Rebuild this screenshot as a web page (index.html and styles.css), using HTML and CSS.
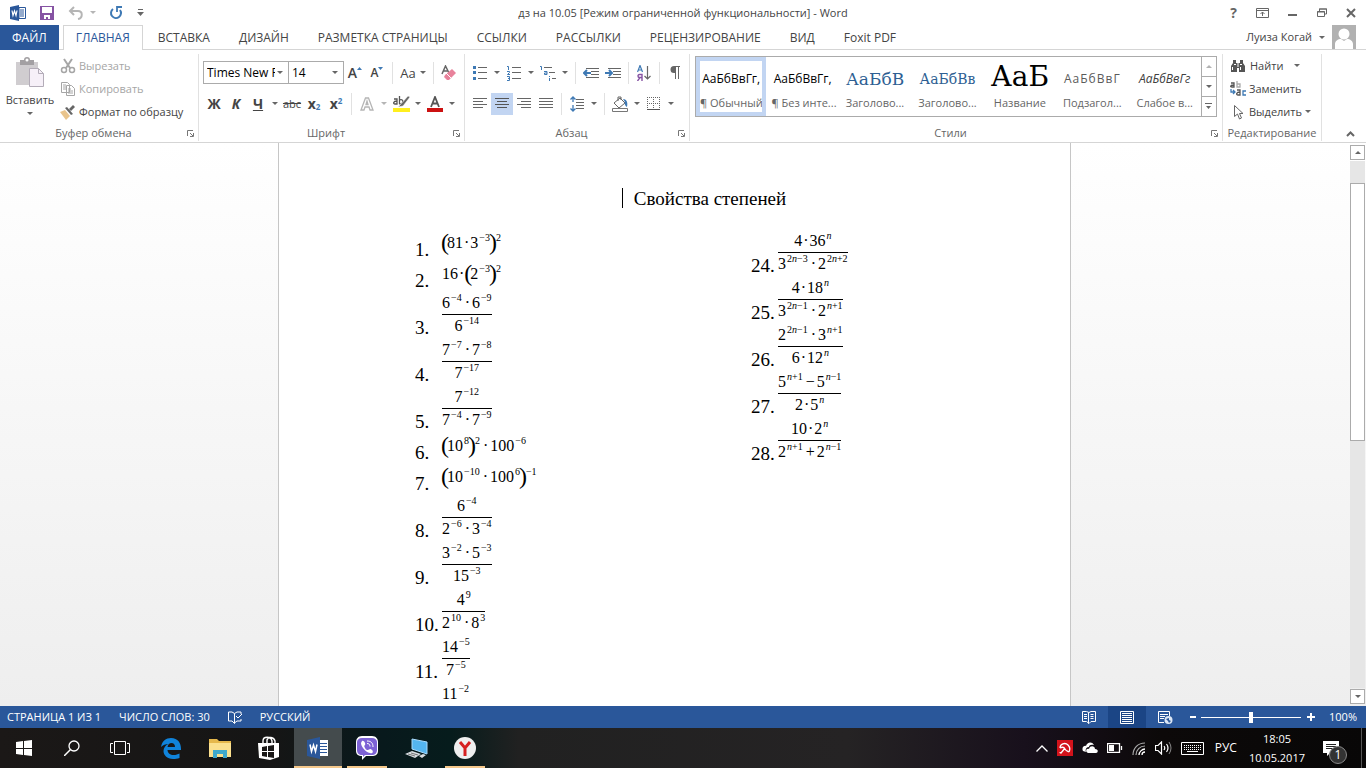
FILE: index.html
```html
<!DOCTYPE html>
<html lang="ru">
<head>
    <meta charset="UTF-8">
    <meta name="viewport" content="width=device-width, initial-scale=1.0">
    <title>дз на 10.05 - Word</title>
    <link rel="stylesheet" href="styles.css">
</head>
<body>
    <header class="titlebar">
        <div class="quick-access">
            <svg class="qa-word" width="16" height="16" viewBox="0 0 16 16"><path fill="#2a579a" d="M0 2l9-2v16l-9-2z"/><path fill="#fff" stroke="#2a579a" d="M9 2.500h6.500v11H9z"/><path stroke="#2a579a" d="M10 5h4M10 7h4M10 9h4M10 11h4"/><path fill="none" stroke="#fff" stroke-width="1.200" d="M2 5.500l1 5 1.500-4.500L6 10.500l1-5"/></svg>
            <button class="icon-btn" aria-label="Сохранить"><svg width="14" height="14" viewBox="0 0 14 14"><path fill="#8653a3" d="M0 0h14v14H0z"/><path fill="#fff" d="M2 1h10v6H2zM4 9h6v4H8v-2H6v2H4z"/></svg></button>
            <button class="icon-btn" aria-label="Отменить"><svg width="16" height="14" viewBox="0 0 16 14"><path fill="none" stroke="#b5b5b5" stroke-width="2" d="M1.500 5H10c5 0 5 7 0 8M6 1L2 5l4 4"/></svg></button>
            <span class="caret light"></span>
            <button class="icon-btn redo" aria-label="Повторить"><svg width="14" height="14" viewBox="0 0 14 14"><path fill="none" stroke="#3e79b4" stroke-width="2" d="M4 3a5 5 0 1 0 7 1"/><path fill="none" stroke="#3e79b4" stroke-width="1.800" d="M13 1H8v5"/></svg></button>
            <button class="icon-btn" aria-label="Настройка панели"><svg width="7" height="7" viewBox="0 0 7 7"><path fill="#666" d="M1 0h5v1H1zM0 3h7L3.500 7z"/></svg></button>
        </div>
        <div class="title">дз на 10.05 [Режим ограниченной функциональности] - Word</div>
        <div class="window-controls">
            <button class="icon-btn help" aria-label="Справка">?</button>
            <button class="icon-btn" aria-label="Параметры ленты"><svg width="13" height="10" viewBox="0 0 13 10"><path fill="none" stroke="#666" d="M.5.5h12v9H.5zM.5 2.500h12M6.500 8V4M4.500 6l2-2 2 2"/></svg></button>
            <button class="icon-btn" aria-label="Свернуть"><svg width="10" height="10" viewBox="0 0 10 10"><path fill="#666" d="M0 6h9v2H0z"/></svg></button>
            <button class="icon-btn" aria-label="Развернуть"><svg width="10" height="10" viewBox="0 0 10 10"><path fill="none" stroke="#666" d="M.5 3.500h7v5h-7zM2.500 3V1h7v5H8"/><path stroke="#666" d="M0 4h8M2 1h8"/></svg></button>
            <button class="icon-btn" aria-label="Закрыть"><svg width="10" height="10" viewBox="0 0 10 10"><path stroke="#666" stroke-width="2" d="M1 1l8 8M9 1L1 9"/></svg></button>
        </div>
    </header>

    <nav class="tabs">
        <button class="tab file">ФАЙЛ</button>
        <button class="tab active">ГЛАВНАЯ</button>
        <button class="tab">ВСТАВКА</button>
        <button class="tab">ДИЗАЙН</button>
        <button class="tab">РАЗМЕТКА СТРАНИЦЫ</button>
        <button class="tab">ССЫЛКИ</button>
        <button class="tab">РАССЫЛКИ</button>
        <button class="tab">РЕЦЕНЗИРОВАНИЕ</button>
        <button class="tab">ВИД</button>
        <button class="tab">Foxit PDF</button>
        <button class="account">
            Луиза Когай <span class="caret"></span>
            <svg width="24" height="24" viewBox="0 0 24 24"><path fill="#b1b1b1" d="M0 0h24v24H0z"/><circle cx="12" cy="9" r="5.500" fill="#fff"/><path fill="#fff" d="M3 24v-5c0-3 3-5 6-5l3 2 3-2c3 0 6 2 6 5v5z"/></svg>
        </button>
    </nav>

    <div class="ribbon">
        <section class="group clipboard">
            <div class="group-body">
                <button class="paste">
                    <svg width="30" height="31" viewBox="0 0 30 31"><path fill="#d0cdd0" d="M1 5h22v23H1z"/><path fill="#a3a0a3" d="M5 3h4a3 3 0 0 1 6 0h4v5H5z"/><circle cx="12" cy="3" r="1.500" fill="#fff"/><path fill="#f6f0f8" stroke="#b3acb8" d="M14.500 11.500h9l5 5v13h-14z"/><path fill="none" stroke="#b3acb8" d="M23.500 11.500v5h5"/></svg>
                    <span>Вставить</span>
                    <span class="caret"></span>
                </button>
                <div class="command-list">
                    <button class="command disabled"><svg width="16" height="16" viewBox="0 0 16 16"><path fill="none" stroke="#a6a6a6" stroke-width="2" d="M4 1l6 9M12 1l-6 9"/><circle cx="4" cy="12" r="2.500" fill="none" stroke="#a6a6a6" stroke-width="1.500"/><circle cx="12" cy="12" r="2.500" fill="none" stroke="#a6a6a6" stroke-width="1.500"/></svg>Вырезать</button>
                    <button class="command disabled"><svg width="16" height="16" viewBox="0 0 16 16"><path fill="#fff" stroke="#a6a6a6" d="M1.500 1.500h6l2 2v8h-8zM3 4h3M3 6h3M3 8h3M6.500 4.500h5l3 3v7h-8zM8 8h3M8 10h5M8 12h5"/></svg>Копировать</button>
                    <button class="command"><svg width="16" height="16" viewBox="0 0 16 16"><path fill="#e9c48c" d="M0 8l5-2 5 6-4 4z"/><path fill="#666" d="M5 4l2-1 6 7-2 1zM9 5l4-4 2 2-4 4z"/></svg>Формат по образцу</button>
                </div>
            </div>
            <div class="group-label"><span>Буфер обмена</span><button class="launcher" aria-label="Буфер обмена"><svg width="7" height="7" viewBox="0 0 7 7"><path fill="none" stroke="#777" d="M.5 6V.5H6M3 3l3 3M6.500 3v3.500H3"/></svg></button></div>
        </section>

        <section class="group font">
            <div class="group-body rows">
                <div class="tool-row">
                    <label class="combo font-name"><select aria-label="Шрифт"><option>Times New Roman</option></select></label>
                    <label class="combo font-size"><select aria-label="Размер шрифта"><option>14</option></select></label>
                    <button class="tool" aria-label="Увеличить размер"><span class="letter">A</span><svg width="5" height="14" viewBox="0 0 5 14"><path fill="#3e79b4" d="M0 4h5L2.500 1z"/></svg></button>
                    <button class="tool" aria-label="Уменьшить размер"><span class="letter small">A</span><svg width="5" height="14" viewBox="0 0 5 14"><path fill="#3e79b4" d="M0 1h5L2.500 4z"/></svg></button>
                    <i class="sep"></i>
                    <button class="tool case">Aa<span class="caret"></span></button>
                    <i class="sep"></i>
                    <button class="tool" aria-label="Очистить формат"><svg width="16" height="16" viewBox="0 0 16 16"><path fill="none" stroke="#666" stroke-width="1.500" d="M1 9l3.500-8L8 8M2 6h5"/><path fill="#e8829b" d="M4 10l7-6 4 4-7 7H6l-3-3z"/><path stroke="#fff" d="M5 8l5 5"/></svg></button>
                </div>
                <div class="tool-row">
                    <button class="tool bold">Ж</button>
                    <button class="tool bold italic">К</button>
                    <button class="tool bold under">Ч</button><span class="drop"><span class="caret"></span></span>
                    <button class="tool strike">abc</button>
                    <button class="tool bold">x<sub class="idx">2</sub></button>
                    <button class="tool bold">x<sup class="idx">2</sup></button>
                    <i class="sep"></i>
                    <button class="tool" aria-label="Текстовые эффекты"><svg width="14" height="14" viewBox="0 0 14 14"><path fill="#fff" stroke="#b5b5b5" stroke-width="1.300" d="M1 13L5.500 1h3L13 13h-3l-1-3H5l-1 3zM6 7.500h2L7 4z"/></svg></button><span class="drop"><span class="caret light"></span></span>
                    <button class="tool" aria-label="Цвет выделения"><svg width="17" height="16" viewBox="0 0 17 16"><path fill="#ffef1f" d="M0 12h17v4H0z"/><path fill="none" stroke="#555" stroke-width="1.300" d="M1 3h3v5H2C0 8 0 5 4 5M6.500 0v8M6.500 4c5-2 4 5 0 4"/><path fill="#666" stroke="#fff" stroke-width=".5" d="M15 0l2 1-7 9-5 1 3-3z"/></svg></button><span class="drop"><span class="caret"></span></span>
                    <button class="tool" aria-label="Цвет текста"><svg width="16" height="16" viewBox="0 0 16 16"><path fill="#c11" d="M0 12h16v4H0z"/><path fill="none" stroke="#555" stroke-width="1.800" d="M4 11L8 1l4 10M5.500 7.500h5"/></svg></button><span class="drop"><span class="caret"></span></span>
                </div>
            </div>
            <div class="group-label"><span>Шрифт</span><button class="launcher" aria-label="Шрифт"><svg width="7" height="7" viewBox="0 0 7 7"><path fill="none" stroke="#777" d="M.5 6V.5H6M3 3l3 3M6.500 3v3.500H3"/></svg></button></div>
        </section>

        <section class="group paragraph">
            <div class="group-body rows">
                <div class="tool-row">
                    <button class="tool" aria-label="Маркеры"><svg width="14" height="16" viewBox="0 0 14 16"><path fill="#3e79b4" d="M0 1h3v3H0zM0 6h3v3H0zM0 12h3v3H0z"/><path stroke="#666" d="M5 2.500h9M5 7.500h9M5 13.500h9"/></svg></button><span class="drop"><span class="caret"></span></span>
                    <button class="tool" aria-label="Нумерация"><svg width="14" height="16" viewBox="0 0 14 16"><path fill="none" stroke="#3e79b4" d="M0 1.500h1.500V5M0 6.500h2.500v1L.5 9.500H3M0 11.500h2.500v4H0M1 13.500h1.500"/><path stroke="#666" d="M5 2.500h9M5 7.500h9M5 13.500h9"/></svg></button><span class="drop"><span class="caret"></span></span>
                    <button class="tool" aria-label="Многоуровневый список"><svg width="16" height="16" viewBox="0 0 16 16"><path fill="none" stroke="#3e79b4" d="M0 1.500h1.500V5M4 6.500h3v3H4.500V8H7M9.500 11v1M9.500 13v3"/><path stroke="#666" d="M4 2.500h8M9 7.500h6M12 13.500h4"/></svg></button><span class="drop"><span class="caret"></span></span>
                    <i class="sep"></i>
                    <button class="tool" aria-label="Уменьшить отступ"><svg width="16" height="12" viewBox="0 0 16 12"><path stroke="#666" d="M3 1.500h13M8 4.500h8M8 7.500h8M3 10.500h13"/><path fill="none" stroke="#3e79b4" stroke-width="2" d="M1 6h7M4 3L1 6l3 3"/></svg></button>
                    <button class="tool" aria-label="Увеличить отступ"><svg width="16" height="12" viewBox="0 0 16 12"><path stroke="#666" d="M3 1.500h13M8 4.500h8M8 7.500h8M3 10.500h13"/><path fill="none" stroke="#3e79b4" stroke-width="2" d="M0 6h7M4 3l3 3-3 3"/></svg></button>
                    <i class="sep"></i>
                    <button class="tool" aria-label="Сортировка"><svg width="14" height="16" viewBox="0 0 14 16"><path fill="none" stroke="#3e79b4" stroke-width="1.200" d="M.5 7L3 .5 5.500 7M1.500 5h3"/><path fill="none" stroke="#8653a3" stroke-width="1.400" d="M5 16V9.500H2.500c-2 0-2 3 0 3H5M3 12.500L.5 16"/><path fill="none" stroke="#666" stroke-width="1.200" d="M10.500 1v13M7.500 11l3 3 3-3"/></svg></button>
                    <i class="sep"></i>
                    <button class="tool" aria-label="Знаки абзаца"><svg width="10" height="13" viewBox="0 0 10 13"><path fill="#666" d="M4 0h6v1H9v12H8V1H6v12H5V7H4a3.500 3.500 0 0 1 0-7z"/></svg></button>
                </div>
                <div class="tool-row">
                    <button class="tool" aria-label="По левому краю"><svg width="14" height="12" viewBox="0 0 14 12"><path stroke="#666" d="M0 .5h14M0 3.500h10M0 6.500h14M0 9.500h10"/></svg></button>
                    <button class="tool pressed" aria-label="По центру"><svg width="14" height="12" viewBox="0 0 14 12"><path stroke="#555" d="M0 .5h14M2 3.500h10M0 6.500h14M2 9.500h10"/></svg></button>
                    <button class="tool" aria-label="По правому краю"><svg width="14" height="12" viewBox="0 0 14 12"><path stroke="#666" d="M0 .5h14M4 3.500h10M0 6.500h14M4 9.500h10"/></svg></button>
                    <button class="tool" aria-label="По ширине"><svg width="14" height="12" viewBox="0 0 14 12"><path stroke="#666" d="M0 .5h14M0 3.500h14M0 6.500h14M0 9.500h14"/></svg></button>
                    <i class="sep"></i>
                    <button class="tool" aria-label="Интервал"><svg width="14" height="16" viewBox="0 0 14 16"><path fill="none" stroke="#3e79b4" stroke-width="1.300" d="M3 1v5M3 9v6M.5 3.500L3 1l2.500 2.500M.5 12.500L3 15l2.500-2.500"/><path stroke="#666" d="M6 3.500h8M6 6.500h8M6 9.500h8M6 12.500h8"/></svg></button><span class="drop"><span class="caret"></span></span>
                    <i class="sep"></i>
                    <button class="tool" aria-label="Заливка"><svg width="17" height="16" viewBox="0 0 17 16"><path fill="#fff" stroke="#777" d="M.5 12.500h15v3H.5z"/><path fill="#fff" stroke="#666" d="M2 7l6-5 5 5-6 5zM6 5V1h3v3"/><path fill="#3e79b4" d="M11 3c4 0 5 4 4 8-2-1-3-4-2-5z"/></svg></button><span class="drop"><span class="caret"></span></span>
                    <button class="tool" aria-label="Границы"><svg width="14" height="14" viewBox="0 0 14 14"><path fill="none" stroke="#666" stroke-dasharray="1 1" d="M0 .5h13M.5 0v12M12.500 0v12M6.500 0v12M0 6.500h13"/><path stroke="#555" d="M0 12.500h13"/></svg></button><span class="drop"><span class="caret"></span></span>
                </div>
            </div>
            <div class="group-label"><span>Абзац</span><button class="launcher" aria-label="Абзац"><svg width="7" height="7" viewBox="0 0 7 7"><path fill="none" stroke="#777" d="M.5 6V.5H6M3 3l3 3M6.500 3v3.500H3"/></svg></button></div>
        </section>

        <section class="group styles">
            <div class="group-body">
                <div class="gallery">
                    <button class="style selected"><span class="sample">АаБбВвГг,</span><span class="style-name">¶ Обычный</span></button>
                    <button class="style"><span class="sample">АаБбВвГг,</span><span class="style-name">¶ Без инте...</span></button>
                    <button class="style"><span class="sample heading-1">АаБбВ</span><span class="style-name">Заголово...</span></button>
                    <button class="style"><span class="sample heading-2">АаБбВв</span><span class="style-name">Заголово...</span></button>
                    <button class="style"><span class="sample name">АаБ</span><span class="style-name">Название</span></button>
                    <button class="style"><span class="sample subtitle">АаБбВвГ</span><span class="style-name">Подзагол...</span></button>
                    <button class="style"><span class="sample subtle">АаБбВвГг</span><span class="style-name">Слабое в...</span></button>
                    <div class="gallery-scroll">
                        <button class="off" aria-label="Вверх"><span class="caret up"></span></button>
                        <button aria-label="Вниз"><span class="caret"></span></button>
                        <button aria-label="Ещё"><svg width="7" height="7" viewBox="0 0 7 7"><path fill="#666" d="M0 0h7v1H0zM1 3h5L3.500 6z"/></svg></button>
                    </div>
                </div>
            </div>
            <div class="group-label"><span>Стили</span><button class="launcher" aria-label="Стили"><svg width="7" height="7" viewBox="0 0 7 7"><path fill="none" stroke="#777" d="M.5 6V.5H6M3 3l3 3M6.500 3v3.500H3"/></svg></button></div>
        </section>

        <section class="group editing">
            <div class="group-body">
                <div class="command-list">
                    <button class="command find"><svg width="16" height="16" viewBox="0 0 16 16"><path fill="#555" d="M3 2h3v3h4V2h3v3l2 3v6H9v-4H7v4H1V8l2-3z"/><path stroke="#fff" d="M8 5v4M2.500 9v3M10.500 9v3M4 6.500h2M10 6.500h2"/></svg>Найти<span class="caret"></span></button>
                    <button class="command"><svg width="16" height="16" viewBox="0 0 16 16"><path fill="none" stroke="#555" stroke-width="1.300" d="M1 2h3v4H2C0 6 0 4 4 4M7 9h3v5H8c-2 0-2-3 2-3"/><path fill="none" stroke="#aaa" stroke-width="1.300" d="M7 0v6h3V3H7"/><path fill="none" stroke="#3e79b4" stroke-width="1.300" d="M16 10h-3v4h3M1 8v3h4M3 9l2 2-2 2"/></svg>Заменить</button>
                    <button class="command"><svg width="16" height="16" viewBox="0 0 16 16"><path fill="#fff" stroke="#666" d="M4.500 1.500v11l3-2.500 2 5 2-1-2-4.500h3.500z"/></svg>Выделить<span class="caret"></span></button>
                </div>
            </div>
            <div class="group-label"><span>Редактирование</span></div>
        </section>
        <button class="collapse" aria-label="Свернуть ленту"><svg width="9" height="6" viewBox="0 0 9 6"><path fill="none" stroke="#666" stroke-width="2" d="M1 5l3.500-3.500L8 5"/></svg></button>
    </div>

    <main class="workspace">
        <div class="canvas">
            <article class="page">
                <h1 class="doc-title"><span class="doc-title-text">Свойства степеней</span></h1>
                <div class="columns">
                    <ol class="tasks">
                        <li><b>1.</b><span class="expr"><i class="par">(</i>81<i class="op">·</i>3<sup>−3</sup><i class="par">)</i><sup>2</sup></span></li>
                        <li><b>2.</b><span class="expr">16<i class="op">·</i><i class="par">(</i>2<sup>−3</sup><i class="par">)</i><sup>2</sup></span></li>
                        <li><b>3.</b><span class="frac"><span>6<sup>−4</sup><i class="op">·</i>6<sup>−9</sup></span><span>6<sup>−14</sup></span></span></li>
                        <li><b>4.</b><span class="frac"><span>7<sup>−7</sup><i class="op">·</i>7<sup>−8</sup></span><span>7<sup>−17</sup></span></span></li>
                        <li><b>5.</b><span class="frac"><span>7<sup>−12</sup></span><span>7<sup>−4</sup><i class="op">·</i>7<sup>−9</sup></span></span></li>
                        <li><b>6.</b><span class="expr"><i class="par">(</i>10<sup>8</sup><i class="par">)</i><sup>2</sup><i class="op">·</i>100<sup>−6</sup></span></li>
                        <li><b>7.</b><span class="expr"><i class="par">(</i>10<sup>−10</sup><i class="op">·</i>100<sup>6</sup><i class="par">)</i><sup>−1</sup></span></li>
                        <li><b>8.</b><span class="frac"><span>6<sup>−4</sup></span><span>2<sup>−6</sup><i class="op">·</i>3<sup>−4</sup></span></span></li>
                        <li><b>9.</b><span class="frac"><span>3<sup>−2</sup><i class="op">·</i>5<sup>−3</sup></span><span>15<sup>−3</sup></span></span></li>
                        <li><b>10.</b><span class="frac"><span>4<sup>9</sup></span><span>2<sup>10</sup><i class="op">·</i>8<sup>3</sup></span></span></li>
                        <li><b>11.</b><span class="frac"><span>14<sup>−5</sup></span><span>7<sup>−5</sup></span></span></li>
                        <li><b></b><span class="frac open"><span>11<sup>−2</sup></span><span></span></span></li>
                    </ol>
                    <ol class="tasks">
                        <li><b>24.</b><span class="frac"><span>4<i class="op">·</i>36<sup><em>n</em></sup></span><span>3<sup>2<em>n</em>−3</sup><i class="op">·</i>2<sup>2<em>n</em>+2</sup></span></span></li>
                        <li><b>25.</b><span class="frac"><span>4<i class="op">·</i>18<sup><em>n</em></sup></span><span>3<sup>2<em>n</em>−1</sup><i class="op">·</i>2<sup><em>n</em>+1</sup></span></span></li>
                        <li><b>26.</b><span class="frac"><span>2<sup>2<em>n</em>−1</sup><i class="op">·</i>3<sup><em>n</em>+1</sup></span><span>6<i class="op">·</i>12<sup><em>n</em></sup></span></span></li>
                        <li><b>27.</b><span class="frac"><span>5<sup><em>n</em>+1</sup><i class="op">−</i>5<sup><em>n</em>−1</sup></span><span>2<i class="op">·</i>5<sup><em>n</em></sup></span></span></li>
                        <li><b>28.</b><span class="frac"><span>10<i class="op">·</i>2<sup><em>n</em></sup></span><span>2<sup><em>n</em>+1</sup><i class="op">+</i>2<sup><em>n</em>−1</sup></span></span></li>
                    </ol>
                </div>
            </article>
        </div>
        <div class="scrollbar">
            <button class="scroll-btn" aria-label="Прокрутить вверх"><span class="caret up"></span></button>
            <div class="track"><div class="thumb"></div></div>
            <button class="scroll-btn" aria-label="Прокрутить вниз"><span class="caret"></span></button>
        </div>
    </main>

    <footer class="statusbar">
        <span class="status-page">СТРАНИЦА 1 ИЗ 1</span>
        <span>ЧИСЛО СЛОВ: 30</span>
        <svg width="14" height="13" viewBox="0 0 14 13"><path fill="none" stroke="#fff" d="M6.500 2.500L4 1H.5v9H4l2.500 2.500V2.500L9 1h4v2M6.500 12L9 10h4V8M8 5l2 2 4-4"/></svg>
        <span>РУССКИЙ</span>
        <div class="views">
            <button class="view" aria-label="Режим чтения"><svg width="14" height="13" viewBox="0 0 14 13"><path fill="none" stroke="#fff" d="M6.500 1.500v11M.5.5h4l2.500 1L9 .5h4.500v10H9l-2 2-2.500-2h-4zM2 3.500h3M2 5.500h3M2 7.500h3M8.500 3.500h3M8.500 5.500h3M8.500 7.500h3"/></svg></button>
            <button class="view on" aria-label="Разметка страницы"><svg width="14" height="13" viewBox="0 0 14 13"><path fill="none" stroke="#fff" d="M.5.5h13v12H.5zM2 2.500h10M2 4.500h10M2 6.500h10M2 8.500h10M2 10.500h10"/></svg></button>
            <button class="view" aria-label="Веб-документ"><svg width="15" height="13" viewBox="0 0 15 13"><path fill="none" stroke="#fff" d="M6 11.500H.5V.5h11V5M2 3.500h8M2 5.500h5M2 7.500h4"/><circle cx="10.500" cy="9" r="4" fill="#dce7f5"/><path fill="#2a579a" d="M8 8l3-1v2l2 1-2 2-1-2z"/></svg></button>
        </div>
        <button class="zoom-btn" aria-label="Уменьшить"><svg width="7" height="8" viewBox="0 0 7 8"><path fill="#fff" d="M0 3h6v2H0z"/></svg></button>
        <input class="zoom-range" type="range" min="0" max="100" value="50" aria-label="Масштаб">
        <button class="zoom-btn" aria-label="Увеличить"><svg width="8" height="8" viewBox="0 0 8 8"><path fill="#fff" d="M0 3h3V0h2v3h3v2H5v3H3V5H0z"/></svg></button>
        <span class="zoom-value">100%</span>
    </footer>

    <div class="taskbar">
        <div class="system-apps">
            <button class="app" aria-label="Пуск"><svg width="16" height="16" viewBox="0 0 16 16"><path fill="#fff" d="M0 2l7-1v7H0zM8 1l8-1v8H8zM0 9h7v6l-7-1zM8 9h8v7l-8-1z"/></svg></button>
            <button class="app" aria-label="Поиск"><svg width="16" height="16" viewBox="0 0 16 16"><circle cx="10" cy="6" r="5" fill="none" stroke="#fff" stroke-width="1.300"/><path stroke="#fff" stroke-width="1.500" d="M6.500 9.500L0 16"/></svg></button>
            <button class="app" aria-label="Представление задач"><svg width="20" height="14" viewBox="0 0 20 14"><path fill="none" stroke="#fff" d="M4.500.5h11v13h-11zM3 2.500H.5v9H3M17 2.500h2.500v9H17"/></svg></button>
        </div>
        <div class="apps">
            <button class="app" aria-label="Edge"><svg width="20" height="21" viewBox="0 0 20 21"><path fill="#1083da" d="M0 9C1 3 5 0 10 0c7 0 10 5 10 11v1H6.500c0 3 3 5 6 5 2.500 0 4.500-.7 6-1.500V20c-2 .7-4 1-6.500 1-6 0-9.500-4-9.500-8 0-3 2-6 5-7-3 0-5.500 1-7.500 3zm6.500 0H14c0-2.500-1.500-4-3.500-4s-3.500 1.500-4 4z"/></svg></button>
            <button class="app" aria-label="Проводник"><svg width="22" height="19" viewBox="0 0 22 19"><path fill="#e6b84c" d="M0 0h8l2 2h12v16H0z"/><path fill="#fbe08e" d="M0 4h22v14H0z"/><path fill="#3fa9cc" d="M4 11h14v8h-4v-4H8v4H4z"/></svg></button>
            <button class="app" aria-label="Магазин"><svg width="22" height="24" viewBox="0 0 22 24"><path fill="none" stroke="#fff" stroke-width="1.400" d="M5 7V5c0-5 8-5 9 0v2M9 7V4c1-4 7-3 8 1v2"/><path fill="#fff" d="M0 7h21v14l-9 3-11-2z"/><path fill="#191716" d="M4 11l5-1v5H4zM10 10l6-1v6h-6zM4 16h5v5l-5-1zM10 16h6v6l-6-1z"/></svg></button>
            <button class="app current" aria-label="Word"><svg width="22" height="22" viewBox="0 0 22 22"><path fill="#fff" d="M11 3h10v16H11z"/><path stroke="#2a579a" d="M13 6.500h7M13 9.500h7M13 12.500h7M13 15.500h7"/><path fill="#2a579a" d="M0 3l13-3v22L0 19z"/><path fill="none" stroke="#fff" stroke-width="1.500" d="M3 7.500l1.500 7L6.500 8l2 6.500 1.500-7"/></svg></button>
            <button class="app running" aria-label="Viber"><svg width="24" height="24" viewBox="0 0 24 24"><path fill="#fff" d="M7 0h10c4 0 6 3 6 6v9c0 4-3 5-6 5h-6l-4 4v-4c-4 0-6-2-6-5V6c0-3 2-6 6-6z"/><path fill="#7d62d5" d="M7 2h10c3 0 5 2 5 4v8c0 3-2 5-5 5h-7l-2 2v-2H7c-3 0-5-2-5-5V6c0-2 2-4 5-4z"/><path fill="#fff" d="M7 5c2-1 4 3 3 4s-1 1 0 3 2 2 3 2 2-2 4 0 0 4-2 3c-5-1-9-7-9-10z"/><path fill="none" stroke="#fff" d="M12 5c4 0 6 2 6 6M12 7.500c2 0 3 1 3 3"/></svg></button>
            <button class="app" aria-label="Компьютер"><svg width="23" height="21" viewBox="0 0 23 21"><path fill="#54b5ef" stroke="#a9dafb" d="M7 1l15 3v12L7 11z"/><path fill="#d8dde1" d="M0 16l7-3 9 3-6 4zM14 18l4-2 3 1-4 3z"/><path stroke="#777" d="M3 16l7 2M6 15l7 2"/></svg></button>
            <button class="app running" aria-label="Яндекс"><svg width="22" height="22" viewBox="0 0 22 22"><circle cx="11" cy="11" r="11" fill="#efefef"/><path fill="none" stroke="#d62020" stroke-width="3" d="M6 5l5 6 5-6M11 10v9"/></svg></button>
        </div>
        <div class="tray">
            <svg width="12" height="7" viewBox="0 0 12 7"><path fill="none" stroke="#fff" stroke-width="1.300" d="M.5 6.500L6 1l5.500 5.500"/></svg>
            <svg class="avira" width="16" height="16" viewBox="0 0 16 16"><path fill="#d3131b" d="M0 0h16v16H0z"/><path fill="none" stroke="#fff" stroke-width="1.300" d="M3 8c0-4 5-6 8-3 2 2 2 5 1 7M3 8c2-1 4-1 5 1s2 2 4 3M8 8l-4 5c-1 0-1-1-1-1"/></svg>
            <svg width="16" height="12" viewBox="0 0 16 12"><path fill="#fff" d="M1 9C-1 5 3 3 4 4c1-4 6-5 8-1-4-1-5 1-5 2-3 0-4 3-3 5zM6 11c-3-1-2-5 1-4 1-4 6-3 6 0 4 0 3 4 1 4z"/></svg>
            <svg width="16" height="10" viewBox="0 0 16 10"><path fill="none" stroke="#fff" stroke-width="1.300" d="M.5 .5h12v9H.5zM14.500 3v4"/><path fill="#fff" d="M2 2h5v6H2z"/></svg>
            <svg width="14" height="13" viewBox="0 0 14 13"><path fill="none" stroke="#aaa" stroke-width="1.200" d="M1 13C1 6 6 1 13 1M4 13c0-5 4-9 9-9"/><path fill="none" stroke="#fff" stroke-width="1.300" d="M7 13c0-3 3-6 6-6M10 13c0-2 1-3 3-3"/></svg>
            <svg width="17" height="14" viewBox="0 0 17 14"><path fill="none" stroke="#fff" stroke-width="1.200" d="M.5 4.500H3L6.500 1v12L3 9.500H.5zM9 5q1.500 2 0 4M11.500 3q3 4 0 8"/><path fill="none" stroke="#888" d="M14 1q4 6 0 12"/></svg>
            <svg width="23" height="13" viewBox="0 0 23 13"><path fill="none" stroke="#fff" d="M.5.5h22v12H.5z"/><path stroke="#fff" stroke-dasharray="1 1" d="M3 3.500h17M3 5.500h17M3 7.500h17"/><path stroke="#fff" d="M6 9.500h11"/></svg>
            <span class="lang">РУС</span>
            <div class="clock"><time>18:05</time><time>10.05.2017</time></div>
            <button class="notify" aria-label="Уведомления"><svg width="16" height="15" viewBox="0 0 16 15"><path fill="#fff" d="M0 0h16v12H7l-3 3v-3H0z"/><path stroke="#222" d="M3 3.500h10M3 5.500h10M3 7.500h7"/></svg><span class="badge">1</span></button>
        </div>
    </div>
</body>
</html>
```
FILE: styles.css
```css
* {
    box-sizing: border-box;
}
body {
    margin: 0;
    height: 100vh;
    display: flex;
    flex-direction: column;
    overflow: hidden;
    background: #fff;
    color: #444;
    font-family: "Open Sans", "Noto Sans", sans-serif;
    font-size: 11px;
    line-height: 16px;
}
button, select {
    font: inherit;
    color: inherit;
    background: none;
    border: none;
    padding: 0;
    margin: 0;
}
svg {
    display: block;
    flex: none;
}
.caret {
    display: inline-block;
    flex: none;
    border: 3px solid transparent;
    border-top-color: #666;
    border-bottom: none;
}
.caret.light {
    border-top-color: #b5b5b5;
}
.caret.up {
    border-top: none;
    border-bottom: 3px solid #666;
}

/* title bar */
.titlebar {
    flex: none;
    height: 25px;
    display: grid;
    grid-template-columns: 1fr auto 1fr;
    align-items: center;
}
.quick-access {
    display: flex;
    align-items: center;
    gap: 14px;
    padding-left: 10px;
}
.quick-access .caret {
    margin-left: -8px;
}
.redo {
    margin-left: -1px;
}
.window-controls {
    display: flex;
    justify-content: flex-end;
    align-items: center;
    gap: 19px;
    padding-right: 10px;
}
.help {
    font-size: 14px;
    font-weight: bold;
    color: #666;
}

/* tabs */
.tabs {
    flex: none;
    display: flex;
    gap: 1px;
    height: 25px;
    border-bottom: 1px solid #d5d5d5;
}
.tab {
    height: 25px;
    padding: 0 14px;
    font-size: 12px;
    white-space: nowrap;
}
.tab.file {
    padding: 0 12px;
    margin-right: 3px;
    background: #2a579a;
    color: #fff;
}
.tab.active {
    padding: 0 12px;
    background: #fff;
    border: 1px solid #d5d5d5;
    border-bottom: none;
    color: #2a579a;
}
.account {
    display: flex;
    align-items: center;
    gap: 7px;
    margin-left: auto;
    padding-right: 10px;
}

/* ribbon */
.ribbon {
    flex: none;
    display: flex;
    height: 93px;
    border-bottom: 1px solid #d5d5d5;
}
.group {
    position: relative;
    flex: none;
    display: flex;
    flex-direction: column;
    margin: 4px 0 1px;
    border-right: 1px solid #e1e1e1;
}
.group-body {
    flex: 1;
    display: flex;
}
.group-label {
    display: flex;
    height: 16px;
    align-items: center;
    color: #666;
}
.group-label span {
    flex: 1;
    text-align: center;
}
.launcher {
    margin-right: 4px;
}
.clipboard {
    width: 199px;
}
.font {
    width: 266px;
}
.paragraph {
    width: 225px;
}
.styles {
    flex: 1;
    min-width: 0;
}
.editing {
    width: 99px;
}
.paste {
    display: flex;
    flex-direction: column;
    align-items: center;
    width: 60px;
    padding-top: 3px;
    gap: 4px;
}
.command-list {
    display: flex;
    flex-direction: column;
}
.command {
    display: flex;
    align-items: center;
    gap: 3px;
    height: 23px;
    white-space: nowrap;
}
.editing .command {
    padding-left: 7px;
}
.find {
    gap: 4px;
}
.find .caret {
    margin-left: 7px;
}
.disabled {
    color: #a6a6a6;
}
.rows {
    flex-direction: column;
    gap: 8px;
    padding: 7px 0 0 4px;
}
.tool-row {
    display: flex;
    align-items: center;
    height: 23px;
}
.tool {
    display: flex;
    align-items: center;
    justify-content: center;
    width: 22px;
    height: 22px;
}
.tool.pressed {
    background: #c2d5f2;
}
.tool.case {
    width: 32px;
    gap: 4px;
    font-size: 13px;
}
.drop {
    display: flex;
    width: 12px;
    justify-content: center;
}
.sep {
    flex: none;
    width: 1px;
    height: 22px;
    margin: 0 4px;
    background: #e1e1e1;
}
.letter {
    font-size: 14px;
    font-weight: 600;
}
.letter.small {
    font-size: 12px;
}
.tool.bold {
    font-size: 14px;
    font-weight: bold;
}
.italic {
    font-style: italic;
}
.under {
    text-decoration: underline;
}
.strike {
    text-decoration: line-through;
}
.tool .idx {
    margin: 4px 0;
    font-size: 8px;
    line-height: 8px;
    color: #3e79b4;
}
sub.idx {
    align-self: flex-end;
}
sup.idx {
    align-self: flex-start;
}
.combo {
    position: relative;
    height: 23px;
    border: 1px solid #ababab;
    color: #000;
}
.combo::after {
    content: "";
    position: absolute;
    right: 5px;
    top: 9px;
    border: 3px solid transparent;
    border-top-color: #666;
    border-bottom: none;
}
.combo select {
    appearance: none;
    width: 100%;
    height: 21px;
    padding: 0 13px 0 3px;
    font-size: 12px;
}
.font-name {
    width: 86px;
}
.font-size {
    width: 56px;
    margin-left: -1px;
}

/* style gallery */
.styles .group-body {
    min-width: 0;
    padding: 2px 5px 0;
}
.gallery {
    flex: 1;
    min-width: 0;
    display: flex;
    height: 61px;
    border: 1px solid #ababab;
}
.style {
    flex: 1 1 0;
    min-width: 0;
    display: flex;
    flex-direction: column;
    padding: 4px 5px;
    overflow: hidden;
    color: #666;
}
.style.selected {
    padding: 0;
    border: 4px solid #c2d5f2;
}
.sample {
    height: 34px;
    width: 100%;
    font-size: 12px;
    line-height: 36px;
    overflow: hidden;
    white-space: nowrap;
    text-align: center;
    color: #000;
}
.style-name {
    width: 100%;
    white-space: nowrap;
    text-align: center;
}
.heading-1, .heading-2, .name {
    font-family: "DejaVu Serif", serif;
}
.heading-1 {
    font-size: 17px;
    color: #2e5f93;
}
.heading-2 {
    font-size: 14px;
    color: #2e5f93;
}
.name {
    font-size: 28px;
    line-height: 32px;
}
.subtitle {
    color: #5a5a5a;
    letter-spacing: 1px;
}
.subtle {
    color: #404040;
    font-style: italic;
}
.gallery-scroll {
    flex: none;
    width: 15px;
    display: flex;
    flex-direction: column;
    border-left: 1px solid #ababab;
}
.gallery-scroll button {
    flex: 1;
    display: flex;
    align-items: center;
    justify-content: center;
}
.gallery-scroll button + button {
    border-top: 1px solid #ababab;
}
.off {
    opacity: 0.5;
}
.collapse {
    align-self: flex-end;
    margin: 0 10px 5px 23px;
    padding: 0 1px;
}

/* document */
.workspace {
    flex: 1;
    min-height: 0;
    display: flex;
    background: linear-gradient(#fff, #eee);
}
.canvas {
    flex: 1;
    display: flex;
    justify-content: center;
    overflow: hidden;
}
.page {
    width: 793px;
    padding: 45px 42px 0 113px;
    background: #fff;
    border: solid #c6c6c6;
    border-width: 0 1px;
    color: #000;
    font-family: "Liberation Serif", serif;
    font-size: 19px;
    line-height: 22px;
    overflow: hidden;
}
.doc-title {
    margin: 0 0 20px;
    font-size: 19px;
    font-weight: normal;
    text-align: center;
}
.doc-title-text {
    position: relative;
}
/* text cursor */
.doc-title-text::before {
    content: "";
    position: absolute;
    left: -12px;
    top: 0;
    width: 1px;
    height: 20px;
    background: #000;
}
.columns {
    display: grid;
    grid-template-columns: 336px 1fr;
    padding-left: 23px;
}
.tasks {
    list-style: none;
    margin: 0;
    padding: 0;
}
.tasks li {
    display: flex;
    align-items: flex-end;
    min-height: 31px;
}
.tasks b {
    flex: none;
    width: 27px;
    font-weight: normal;
}
.expr, .frac {
    font-size: 16px;
    white-space: nowrap;
}
.expr {
    padding-bottom: 7px;
}
.frac {
    display: flex;
    flex-direction: column;
    padding-bottom: 2px;
}
.frac > span {
    height: 22px;
    text-align: center;
}
.frac > span:first-child {
    height: 23px;
    border-bottom: 1px solid #000;
}
.frac.open > span:first-child {
    border-color: transparent;
}
.tasks sup {
    margin-left: 1px;
    font-size: 10px;
    line-height: 0;
    vertical-align: 7px;
}
.op, .par {
    font-style: normal;
}
.op {
    margin: 0 1px;
}
sup + .op {
    margin: 0 2px 0 3px;
}
.par {
    font-size: 24px;
    line-height: 0;
    vertical-align: -2px;
    margin: 0 -2px 0 -1px;
}

/* vertical scroll bar */
.scrollbar {
    flex: none;
    width: 17px;
    display: flex;
    flex-direction: column;
    gap: 1px;
    padding: 2px 1px;
}
.scroll-btn {
    display: flex;
    height: 15px;
    align-items: center;
    justify-content: center;
    background: #fff;
    border: 1px solid #ababab;
}
.track {
    flex: 1;
    padding-top: 22px;
    background: #e6e6e6;
}
.thumb {
    height: 51%;
    background: #fff;
    border: 1px solid #ababab;
}

/* status bar */
.statusbar {
    flex: none;
    display: flex;
    align-items: center;
    height: 22px;
    padding: 0 9px 0 7px;
    gap: 18px;
    background: #2a579a;
    color: #fff;
}
.views {
    display: flex;
    margin-left: auto;
    height: 22px;
}
.view {
    display: flex;
    align-items: center;
    justify-content: center;
    width: 38px;
}
.view.on {
    background: #1b4585;
}
.zoom-btn {
    margin: 0 -14px 0 -12px;
}
.zoom-range {
    appearance: none;
    width: 100px;
    height: 12px;
    margin: 0;
    background: linear-gradient(#fff, #fff) center / 100% 1px no-repeat;
}
.zoom-range::-webkit-slider-thumb {
    appearance: none;
    width: 4px;
    height: 11px;
    background: #fff;
}
.zoom-value {
    margin-left: 10px;
}

/* taskbar */
.taskbar {
    flex: none;
    display: flex;
    height: 40px;
    background: linear-gradient(90deg, #1b1817 0, #151515 20%, #08191c 28%, #061c1c 33%, #212121 38%, #252324 62%, #18101c 75%, #0c0909 85%, #080707 100%);
    color: #fff;
}
.system-apps, .apps {
    display: flex;
}
.apps {
    gap: 1px;
    margin-left: 3px;
}
.app {
    display: flex;
    align-items: center;
    justify-content: center;
    width: 48px;
    height: 40px;
}
.app.current {
    background: linear-gradient(#f5c88b, #f5c88b) bottom / 100% 2px no-repeat #444b4d;
}
.app.running {
    background: linear-gradient(#f5c88b, #f5c88b) bottom / 40px 2px no-repeat;
}
.tray {
    display: flex;
    align-items: center;
    gap: 9px;
    margin-left: auto;
    padding-right: 4px;
}
.lang {
    margin-left: 2px;
    font-size: 12px;
}
.clock {
    display: flex;
    flex-direction: column;
    align-items: center;
    line-height: 19px;
    margin-left: 3px;
}
.notify {
    position: relative;
    height: 40px;
    margin-left: 9px;
    padding: 0 22px 0 0;
    border-right: 1px solid #555;
}
.badge {
    position: absolute;
    left: 6px;
    top: 18px;
    width: 18px;
    height: 18px;
    border: 1px solid #888;
    border-radius: 50%;
    background: #333;
    font-size: 12px;
    line-height: 16px;
    text-align: center;
}
```
